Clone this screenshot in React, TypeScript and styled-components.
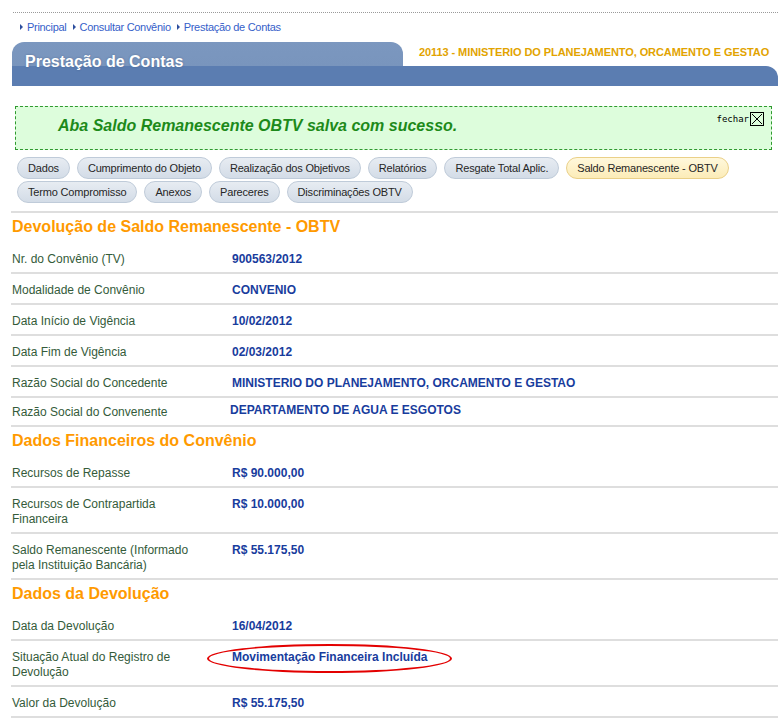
import React from 'react'
import styled, { createGlobalStyle } from 'styled-components'

const GlobalStyle = createGlobalStyle`
  body {
    margin: 0;
    background: #fff;
    font-family: 'Liberation Sans', Arial, sans-serif;
  }
`

const crumbs = ['Principal', 'Consultar Convênio', 'Prestação de Contas']

const tabs = [
  ['Dados', 'Cumprimento do Objeto', 'Realização dos Objetivos', 'Relatórios', 'Resgate Total Aplic.', 'Saldo Remanescente - OBTV'],
  ['Termo Compromisso', 'Anexos', 'Pareceres', 'Discriminações OBTV'],
]
const activeTab = 'Saldo Remanescente - OBTV'

// compact: the Convenente row comes from another table in the original page,
// it is a bit shorter and its value sits 2px up/left
type Row = { label: string; value: string; circled?: boolean; compact?: boolean }
type Section = { title: string; rows: Row[] }

const sections: Section[] = [
  {
    title: 'Devolução de Saldo Remanescente - OBTV',
    rows: [
      { label: 'Nr. do Convênio (TV)', value: '900563/2012' },
      { label: 'Modalidade de Convênio', value: 'CONVENIO' },
      { label: 'Data Início de Vigência', value: '10/02/2012' },
      { label: 'Data Fim de Vigência', value: '02/03/2012' },
      { label: 'Razão Social do Concedente', value: 'MINISTERIO DO PLANEJAMENTO, ORCAMENTO E GESTAO' },
      { label: 'Razão Social do Convenente', value: 'DEPARTAMENTO DE AGUA E ESGOTOS', compact: true },
    ],
  },
  {
    title: 'Dados Financeiros do Convênio',
    rows: [
      { label: 'Recursos de Repasse', value: 'R$ 90.000,00' },
      { label: 'Recursos de Contrapartida Financeira', value: 'R$ 10.000,00' },
      { label: 'Saldo Remanescente (Informado pela Instituição Bancária)', value: 'R$ 55.175,50' },
    ],
  },
  {
    title: 'Dados da Devolução',
    rows: [
      { label: 'Data da Devolução', value: '16/04/2012' },
      { label: 'Situação Atual do Registro de Devolução', value: 'Movimentação Financeira Incluída', circled: true },
      { label: 'Valor da Devolução', value: 'R$ 55.175,50' },
    ],
  },
]

export default function App() {
  return (
    <>
      <GlobalStyle />
      <Page>
        <TopRule />
        <Breadcrumb>
          {crumbs.map((c) => (
            <Crumb key={c}>{c}</Crumb>
          ))}
        </Breadcrumb>

        <Header>
          <TitleTab>
            <Title>Prestação de Contas</Title>
          </TitleTab>
          <HeaderRight>
            <OrgName>20113 - MINISTERIO DO PLANEJAMENTO, ORCAMENTO E GESTAO</OrgName>
            <BarEnd />
          </HeaderRight>
        </Header>

        <SuccessBox>
          <SuccessText>Aba Saldo Remanescente OBTV salva com sucesso.</SuccessText>
          <Close>
            fechar
            <svg width="14" height="14" viewBox="0 0 14 14">
              <rect x="0.5" y="0.5" width="13" height="13" fill="none" stroke="#000" />
              <path d="M2 2 L12 12 M12 2 L2 12" stroke="#000" strokeWidth="1" />
            </svg>
          </Close>
        </SuccessBox>

        <TabBar>
          {tabs.map((line, i) => (
            <TabLine key={i}>
              {line.map((t) => (
                <Tab key={t} $active={t === activeTab}>
                  {t}
                </Tab>
              ))}
            </TabLine>
          ))}
        </TabBar>

        {sections.map((s) => (
          <div key={s.title}>
            <SectionTitle>{s.title}</SectionTitle>
            {s.rows.map((r) => (
              <DataRow key={r.label} $compact={r.compact}>
                <Label>{r.label}</Label>
                <Value $compact={r.compact}>
                  {r.circled ? (
                    <Circled>
                      {r.value}
                      <Ring />
                    </Circled>
                  ) : (
                    r.value
                  )}
                </Value>
              </DataRow>
            ))}
          </div>
        ))}
      </Page>
    </>
  )
}

const Page = styled.div`
  width: 767px;
  padding-left: 11px;
  padding-top: 12px;
`

const TopRule = styled.div`
  margin-left: 2px;
  border-top: 1px dotted #9a9a9a;
`

const Breadcrumb = styled.div`
  display: flex;
  gap: 6px;
  padding: 5px 0 0 9px;
  height: 22px;
  box-sizing: border-box;
`

const Crumb = styled.a`
  display: inline-flex;
  align-items: center;
  font-size: 11px;
  letter-spacing: -0.3px;
  line-height: 14px;
  color: #3560c9;
  cursor: pointer;
  &::before {
    content: '';
    display: inline-block;
    border-left: 3px solid #2d4e9e;
    border-top: 3px solid transparent;
    border-bottom: 3px solid transparent;
    margin-right: 4px;
  }
`

const Header = styled.div`
  display: flex;
  margin: 7px 0 0 1px;
  height: 44px;
`

const TitleTab = styled.div`
  width: 391px;
  height: 44px;
  box-sizing: border-box;
  padding: 10px 0 0 13px;
  border-radius: 12px 12px 0 0;
  background: linear-gradient(to bottom, #7b97bf 0, #7995bd 24px, #5b7db1 24px, #5b7db1 100%);
`

const Title = styled.h1`
  margin: 0;
  font-size: 16px;
  line-height: 20px;
  font-weight: bold;
  color: #fff;
  text-shadow: 0 0 2px rgba(40, 60, 100, 0.45);
`

const HeaderRight = styled.div`
  flex: 1;
  display: flex;
  flex-direction: column;
`

const OrgName = styled.div`
  height: 24px;
  padding: 3px 0 0 16px;
  box-sizing: border-box;
  font-size: 11px;
  letter-spacing: -0.08px;
  line-height: 14px;
  font-weight: bold;
  color: #e2a300;
  white-space: nowrap;
`

const BarEnd = styled.div`
  height: 20px;
  background: #5b7db1;
  border-top-right-radius: 12px;
`

const SuccessBox = styled.div`
  margin: 20px 6px 0 4px;
  height: 44px;
  box-sizing: border-box;
  display: flex;
  align-items: flex-start;
  justify-content: space-between;
  border: 1px dashed #2f9a2f;
  background: #ddfddc;
`

const SuccessText = styled.div`
  padding: 9px 0 0 42px;
  font-size: 16px;
  line-height: 20px;
  font-weight: bold;
  font-style: italic;
  color: #1d8a1a;
`

const Close = styled.div`
  display: flex;
  align-items: center;
  gap: 1px;
  padding: 5px 7px 0 0;
  font-family: 'DejaVu Sans Mono', 'Liberation Mono', monospace;
  font-size: 9px;
  color: #000;
  cursor: pointer;
`

const TabBar = styled.div`
  margin-top: 7px;
  padding: 0 0 8px 6px;
  border-bottom: 2px solid #dedede;
  display: flex;
  flex-direction: column;
  gap: 2px;
`

const TabLine = styled.div`
  display: flex;
  gap: 7px;
`

const Tab = styled.div<{ $active?: boolean }>`
  height: 22px;
  box-sizing: border-box;
  padding: 0 10px;
  border-radius: 11px;
  font-size: 11px;
  letter-spacing: -0.18px;
  line-height: 20px;
  color: #262626;
  white-space: nowrap;
  border: 1px solid ${(p) => (p.$active ? '#ead088' : '#bfcbd9')};
  background: ${(p) =>
    p.$active
      ? 'linear-gradient(to bottom, #fff8dc, #fcecb8)'
      : 'linear-gradient(to bottom, #e7ecf2, #d3dce7)'};
`

const SectionTitle = styled.h2`
  margin: 0;
  padding: 4px 0 6px 1px;
  font-size: 16px;
  line-height: 20px;
  font-weight: bold;
  color: #ff9a00;
`

const DataRow = styled.div<{ $compact?: boolean }>`
  display: grid;
  grid-template-columns: 221px 1fr;
  padding: ${(p) => (p.$compact ? '7px 0 5px' : '9px 0 5px')};
  border-bottom: 2px solid #dedede;
  font-size: 12px;
  line-height: 15px;
`

const Label = styled.div`
  padding-left: 1px;
  padding-right: 20px;
  color: #345b3a;
`

const Value = styled.div<{ $compact?: boolean }>`
  font-weight: bold;
  color: #183c9d;
  margin: ${(p) => (p.$compact ? '-2px 0 0 -2px' : '0')};
`

const Circled = styled.span`
  position: relative;
  display: inline-block;
`

const Ring = styled.span`
  position: absolute;
  left: -25px;
  top: -6px;
  width: 245px;
  height: 29px;
  box-sizing: border-box;
  border: 2px solid #e30000;
  border-radius: 50%;
`
